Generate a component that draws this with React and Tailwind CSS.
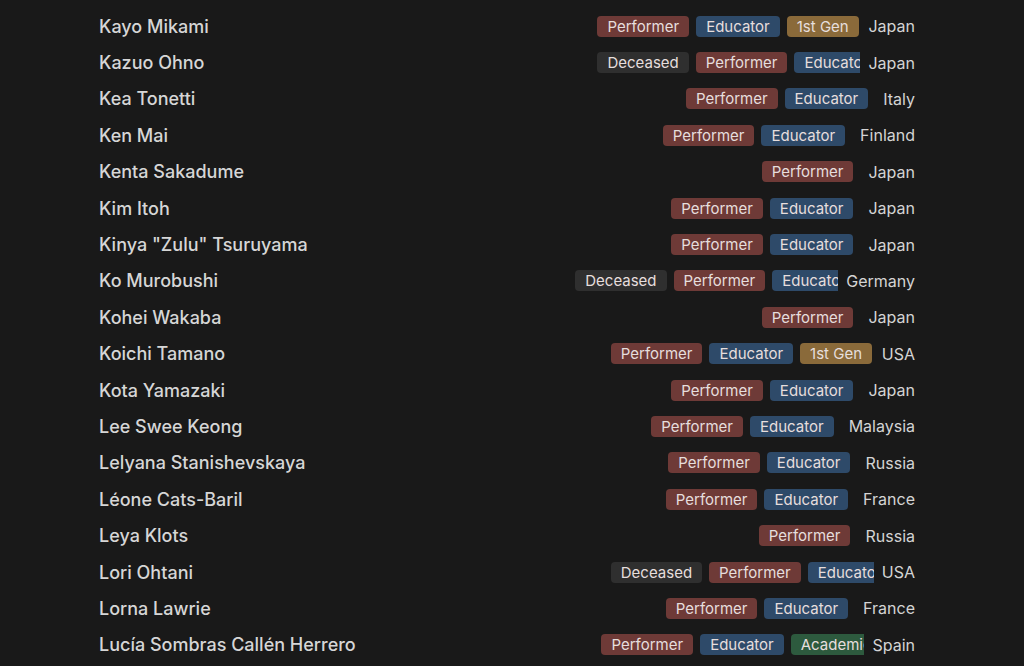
import React from "react";

const TAG = {
  Performer: "bg-[#6e3a37]",
  Educator: "bg-[#2e4a69]",
  "1st Gen": "bg-[#8a6a3a]",
  Deceased: "bg-[#2f2f2f]",
  Academic: "bg-[#2d5a3e]",
};

const rows = [
  ["Kayo Mikami", ["Performer", "Educator", "1st Gen"], "Japan"],
  ["Kazuo Ohno", ["Deceased", "Performer", "Educator"], "Japan"],
  ["Kea Tonetti", ["Performer", "Educator"], "Italy"],
  ["Ken Mai", ["Performer", "Educator"], "Finland"],
  ["Kenta Sakadume", ["Performer"], "Japan"],
  ["Kim Itoh", ["Performer", "Educator"], "Japan"],
  ["Kinya \"Zulu\" Tsuruyama", ["Performer", "Educator"], "Japan"],
  ["Ko Murobushi", ["Deceased", "Performer", "Educator"], "Germany"],
  ["Kohei Wakaba", ["Performer"], "Japan"],
  ["Koichi Tamano", ["Performer", "Educator", "1st Gen"], "USA"],
  ["Kota Yamazaki", ["Performer", "Educator"], "Japan"],
  ["Lee Swee Keong", ["Performer", "Educator"], "Malaysia"],
  ["Lelyana Stanishevskaya", ["Performer", "Educator"], "Russia"],
  ["Léone Cats-Baril", ["Performer", "Educator"], "France"],
  ["Leya Klots", ["Performer"], "Russia"],
  ["Lori Ohtani", ["Deceased", "Performer", "Educator"], "USA"],
  ["Lorna Lawrie", ["Performer", "Educator"], "France"],
  ["Lucía Sombras Callén Herrero", ["Performer", "Educator", "Academic"], "Spain"],
];

export default function App() {
  return (
    <div
      className="w-[1024px] h-[666px] overflow-hidden bg-[#191919] pt-[8px]"
      style={{ fontFamily: "Inter, 'Noto Sans', sans-serif" }}
    >
      <div className="ml-[99px] w-[816px] flex flex-col">
        {rows.map(([name, tags, country]) => (
          <div key={name} className="h-[36.4px] flex items-center">
            <div className="flex-1 min-w-0 text-[18px] font-medium text-[#d6d6d6] whitespace-nowrap">
              {name}
            </div>
            <div className="max-w-[263px] overflow-hidden flex flex-nowrap shrink-0">
              {tags.map((t) => (
                <span
                  key={t}
                  className={`${TAG[t]} shrink-0 mr-[7px] h-[21px] px-[10px] rounded-[4px] text-[15px] leading-[21px] text-[#e6dedd] whitespace-nowrap`}
                >
                  {t}
                </span>
              ))}
            </div>
            <div className="ml-[8px] shrink-0 text-[16px] text-[#d4d4d4] whitespace-nowrap">
              {country}
            </div>
          </div>
        ))}
      </div>
    </div>
  );
}
